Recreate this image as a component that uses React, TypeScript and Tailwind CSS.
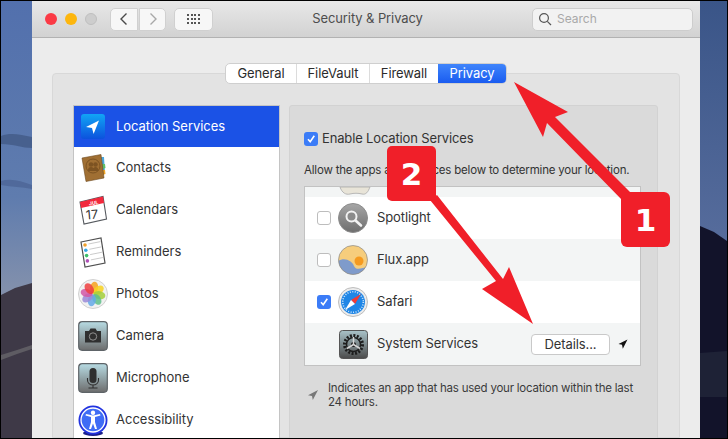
import type { ReactNode } from "react";

const FONT = "font-['Inter','Liberation_Sans',sans-serif]";

function LeftWallpaper() {
  return (
    <svg width="31" height="437" viewBox="0 0 31 437" className="shrink-0">
      <defs>
        <linearGradient id="lw" x1="0" y1="0" x2="0" y2="1">
          <stop offset="0" stopColor="#5270ad" />
          <stop offset="0.45" stopColor="#5f7cae" />
          <stop offset="0.66" stopColor="#8290ac" />
        </linearGradient>
      </defs>
      <rect width="31" height="437" fill="url(#lw)" />
      <path d="M0 135c10-4 20-1 31 1v11c-10 0-18-4-31-4z" fill="#3f5680" opacity=".7" />
      <path d="M0 180c10-3 20 0 31 4v4c-10-2-20-2-31-4z" fill="#4a6393" opacity=".7" />
      <path d="M0 294l14-7 17-5v155H0z" fill="#3e3947" />
      <path d="M0 354l16-5 15-5v4l-15 5-16 6z" fill="#5e5c63" />
    </svg>
  );
}

function RightWallpaper() {
  return (
    <svg width="27" height="437" viewBox="0 0 27 437" className="shrink-0">
      <defs>
        <linearGradient id="rw" x1="0" y1="0" x2="0" y2="1">
          <stop offset="0" stopColor="#3a5588" />
          <stop offset="0.55" stopColor="#566c9c" />
        </linearGradient>
      </defs>
      <rect width="27" height="437" fill="url(#rw)" />
      <path d="M0 225l14 6 13 9v197H0z" fill="#12132a" />
      <path d="M0 352l27-2v46H0z" fill="#1e2236" />
    </svg>
  );
}

function TrafficLights() {
  return (
    <div className="flex items-center gap-2">
      <span className="h-3 w-3 rounded-full bg-[#fb3a45]" />
      <span className="h-3 w-3 rounded-full bg-[#fdb60d]" />
      <span className="h-3 w-3 rounded-full border border-[#bfbfbf] bg-[#cdcdcd]" />
    </div>
  );
}

function NavButtons() {
  return (
    <div className="ml-[13px] flex items-center gap-px">
      <div className="flex h-[23px] w-[28px] items-center justify-center rounded-l-[5px] border border-[#d0d0d0] bg-[#f7f7f7]">
        <svg width="10" height="14" viewBox="0 0 10 14" fill="none" stroke="#4a4a4a" strokeWidth="1.4">
          <path d="M7.5 1.5 2 7l5.5 5.5" />
        </svg>
      </div>
      <div className="flex h-[23px] w-[27px] items-center justify-center rounded-r-[5px] border border-[#d0d0d0] bg-[#f7f7f7]">
        <svg width="10" height="14" viewBox="0 0 10 14" fill="none" stroke="#a8a8a8" strokeWidth="1.4">
          <path d="M2.500 1.500 8 7l-5.500 5.500" />
        </svg>
      </div>
      <div className="ml-[7px] grid h-[23px] w-[39px] grid-cols-4 content-center justify-center justify-items-center gap-y-[2px] rounded-[5px] border border-[#d0d0d0] bg-[#f7f7f7] px-[11px]">
        {Array.from({ length: 12 }).map((_, i) => (
          <span key={i} className="h-[2px] w-[2px] bg-[#555]" />
        ))}
      </div>
    </div>
  );
}

function SearchBox() {
  return (
    <div className="flex h-[23px] w-[161px] items-center gap-[5px] rounded-[5px] border border-[#cdcdcd] bg-[#f2f2f2] pl-[5px]">
      <svg width="14" height="14" viewBox="0 0 14 14" fill="none" stroke="#555" strokeWidth="1.2">
        <circle cx="6" cy="6" r="4.4" />
        <path d="m9.3 9.3 3.7 3.7" />
      </svg>
      <span className="text-[12px] text-[#a9a9a9]">Search</span>
    </div>
  );
}

function TitleBar() {
  return (
    <div className="flex h-[37px] shrink-0 items-center border-b border-[#b2b2b2] bg-linear-to-b from-[#e8e8e8] to-[#d2d2d2] pl-[13px] pr-[7px]">
      <TrafficLights />
      <NavButtons />
      <div className="flex-1 pr-[10px] text-center text-[13px] tracking-[-0.1px] text-[#4d4d4d]">Security &amp; Privacy</div>
      <SearchBox />
    </div>
  );
}

function Tabs() {
  return (
    <div className="relative z-10 mx-auto mt-[25px] flex h-[21px] w-[282px] shrink-0 overflow-hidden rounded-[5px] border border-[#cfcfcf] bg-white text-[13px] tracking-[-0.1px] text-[#2b2b2b]">
      <div className="flex w-[71px] items-center justify-center border-r border-[#dcdcdc]">General</div>
      <div className="flex w-[73px] items-center justify-center border-r border-[#dcdcdc]">FileVault</div>
      <div className="flex w-[68px] items-center justify-center">Firewall</div>
      <div className="flex flex-1 items-center justify-center bg-linear-to-b from-[#3f84fb] to-[#1a5bf0] text-white">
        Privacy
      </div>
    </div>
  );
}

function LocationIcon() {
  return (
    <svg width="26" height="26" viewBox="0 0 26 26">
      <defs>
        <linearGradient id="loc" x1="0" y1="0" x2="0" y2="1">
          <stop offset="0" stopColor="#11a5f5" />
          <stop offset="1" stopColor="#0c52dd" />
        </linearGradient>
      </defs>
      <rect x="1" width="24" height="25" rx="3" fill="url(#loc)" />
      <path d="M19 6.5 6 13l6 1 1.6 6z" fill="#fff" />
    </svg>
  );
}

function ContactsIcon() {
  return (
    <svg width="28" height="30" viewBox="0 0 28 30">
      <path d="M22 4h3l1 16-3 2z" fill="#4aa6dc" />
      <path d="M23 11h3l.5 4-3 1z" fill="#5cc06b" />
      <path d="M23 17h3l.5 4-3 1z" fill="#eda529" />
      <path d="M3 5 22 1.500 25 25 7 28.500z" fill="#a06f33" stroke="#6d4a20" strokeWidth=".6" />
      <circle cx="14" cy="13" r="7" fill="none" stroke="#7d5322" strokeWidth="1" />
      <circle cx="12" cy="11.500" r="2.300" fill="#7d5322" />
      <circle cx="16.500" cy="11.500" r="2.300" fill="#7d5322" />
      <path d="M9 18c0-3 1-4 3-4s3 1 3 4zM14 18c0-3 1-4 2.500-4s3 1 3 4z" fill="#7d5322" />
    </svg>
  );
}

function CalendarIcon() {
  return (
    <svg width="30" height="30" viewBox="0 0 30 30">
      <path d="M2 7 25 1.500 28.500 24 6 29z" fill="#fff" stroke="#55595e" strokeWidth="1.100" />
      <path d="M2 7 25 1.500 26 8 3 13z" fill="#f3283c" />
      <text x="11" y="10" fontSize="5" fontWeight="700" fill="#fff" fontFamily="Inter, sans-serif" transform="rotate(-9 14 8)">
        JUL
      </text>
      <text x="8" y="24" fontSize="12.500" fill="#333" fontFamily="Inter, sans-serif" transform="rotate(-5 14 20)">
        17
      </text>
    </svg>
  );
}

function RemindersIcon() {
  const dots = ["#f0a02c", "#38a9e6", "#3ec06a", "#b050b8"];
  return (
    <svg width="28" height="31" viewBox="0 0 28 31">
      <path d="M2 5 22 1 26 26 6 30z" fill="#fff" stroke="#4f4f4f" strokeWidth="1.200" />
      {dots.map((c, i) => (
        <g key={c}>
          <circle cx={6 + i * 0.8} cy={8 + i * 5.300} r="1.800" fill={c} />
          <path d={`M${9.500 + i * 0.8} ${7 + i * 5.300}l12-2.400`} stroke="#b5b5b5" strokeWidth=".7" />
        </g>
      ))}
    </svg>
  );
}

function PhotosIcon() {
  const petals = ["#f7a21d", "#f8d21f", "#a5cf3b", "#5fc08a", "#64a9e8", "#9a8ad8", "#d257a6", "#ef4040"];
  return (
    <svg width="30" height="30" viewBox="0 0 30 30">
      <circle cx="15" cy="15" r="14.500" fill="#f1f1f1" stroke="#d0d0d0" />
      {petals.map((c, i) => (
        <ellipse key={c} cx="15" cy="8.500" rx="4" ry="6" fill={c} opacity=".85" transform={`rotate(${i * 45 + 10} 15 15)`} />
      ))}
    </svg>
  );
}

function CameraIcon() {
  return (
    <svg width="30" height="30" viewBox="0 0 30 30">
      <defs>
        <linearGradient id="cam" x1="0" y1="0" x2="0" y2="1">
          <stop offset="0" stopColor="#b7dbe3" />
          <stop offset="1" stopColor="#6d6d6d" />
        </linearGradient>
      </defs>
      <rect x=".7" y=".7" width="28.600" height="28.600" rx="3.500" fill="url(#cam)" stroke="#5e6468" strokeWidth="1.200" />
      <path d="M7 10h4l1.500-2.500h5L19 10h4v11.500H7z" fill="#2f2f2f" />
      <circle cx="15" cy="15.500" r="3.700" fill="none" stroke="#9a9a9a" strokeWidth=".9" />
    </svg>
  );
}

function MicIcon() {
  return (
    <svg width="30" height="30" viewBox="0 0 30 30">
      <defs>
        <linearGradient id="mic" x1="0" y1="0" x2="0" y2="1">
          <stop offset="0" stopColor="#b7dbe3" />
          <stop offset="1" stopColor="#6d6d6d" />
        </linearGradient>
      </defs>
      <rect x=".7" y=".7" width="28.600" height="28.600" rx="3.500" fill="url(#mic)" stroke="#5e6468" strokeWidth="1.200" />
      <rect x="11.500" y="5" width="7" height="15" rx="3.500" fill="#2f2f2f" />
      <path d="M9.500 15v2c0 3 2.500 5 5.500 5s5.500-2 5.500-5v-2M15 22v3M10.500 25h9" fill="none" stroke="#2f2f2f" strokeWidth="1.100" />
    </svg>
  );
}

function AccessibilityIcon() {
  return (
    <svg width="30" height="31" viewBox="0 0 30 31">
      <ellipse cx="15" cy="28" rx="10" ry="3" fill="#1b1f8a" />
      <circle cx="15" cy="15" r="14.500" fill="#2233e0" />
      <circle cx="15" cy="15" r="12" fill="#3f6cf5" stroke="#fff" strokeWidth="1.300" />
      <circle cx="15" cy="7.800" r="2.200" fill="#fff" />
      <path d="M7.500 10.500 13 12v5l-2 7h2l2-5.500L17 24h2l-2-7v-5l5.500-1.500-.5-1.500-7 1.500L8 9z" fill="#fff" />
    </svg>
  );
}

function SpotlightIcon() {
  return (
    <svg width="30" height="31" viewBox="0 0 30 31">
      <defs>
        <linearGradient id="spot" x1="0" y1="0" x2="0" y2="1">
          <stop offset="0" stopColor="#a6a6a6" />
          <stop offset="1" stopColor="#6e6e6e" />
        </linearGradient>
      </defs>
      <circle cx="15" cy="15" r="14.500" fill="url(#spot)" stroke="#8c8c8c" />
      <circle cx="13.500" cy="13.500" r="5" fill="#8b8b8b" stroke="#f2f2f2" strokeWidth="2" />
      <path d="m17.500 17.500 5.500 5" stroke="#f2f2f2" strokeWidth="2.600" strokeLinecap="round" />
    </svg>
  );
}

function FluxIcon() {
  return (
    <svg width="30" height="30" viewBox="0 0 30 30">
      <clipPath id="flux">
        <circle cx="15" cy="15" r="14.500" />
      </clipPath>
      <g clipPath="url(#flux)">
        <rect width="30" height="30" fill="#f6cd7c" />
        <circle cx="21" cy="16" r="4.500" fill="#f59a1f" />
        <path d="M0 16c7-4 14 0 16 5s8 2 14 1v8H0z" fill="#7f9bcb" />
      </g>
      <circle cx="15" cy="15" r="14.500" fill="none" stroke="#8a8a8a" strokeWidth=".7" />
    </svg>
  );
}

function SafariIcon() {
  return (
    <svg width="30" height="31" viewBox="0 0 30 31">
      <circle cx="15" cy="15" r="14.500" fill="#ececec" stroke="#bdbdbd" />
      <circle cx="15" cy="15" r="12" fill="#1f86e6" />
      <circle cx="15" cy="15" r="10.300" fill="none" stroke="#cfe6fb" strokeWidth="1.600" strokeDasharray="1 1.500" />
      <path d="M23 7 13 13l4 4z" fill="#f23a35" />
      <path d="M7 23l6-10 4 4z" fill="#fff" />
    </svg>
  );
}

function GearIcon() {
  return (
    <svg width="29" height="29" viewBox="0 0 29 29">
      <defs>
        <linearGradient id="gear" x1="0" y1="0" x2="0" y2="1">
          <stop offset="0" stopColor="#a9c3c9" />
          <stop offset="1" stopColor="#4b4b4b" />
        </linearGradient>
      </defs>
      <rect x=".5" y=".5" width="28" height="28" rx="3" fill="url(#gear)" stroke="#555" />
      <circle cx="14.500" cy="14.500" r="9" fill="none" stroke="#1d1d1d" strokeWidth="3" strokeDasharray="2 1.500" />
      <circle cx="14.500" cy="14.500" r="7" fill="none" stroke="#1d1d1d" strokeWidth="1.500" />
      <circle cx="14.500" cy="14.500" r="2.500" fill="#1d1d1d" />
      <path d="M14.500 14.500V7M14.500 14.500l6.500 4M14.500 14.500l-6.500 4" stroke="#d6d6d6" strokeWidth="1.500" />
    </svg>
  );
}

const services: { label: string; icon: ReactNode }[] = [
  { label: "Contacts", icon: <ContactsIcon /> },
  { label: "Calendars", icon: <CalendarIcon /> },
  { label: "Reminders", icon: <RemindersIcon /> },
  { label: "Photos", icon: <PhotosIcon /> },
  { label: "Camera", icon: <CameraIcon /> },
  { label: "Microphone", icon: <MicIcon /> },
  { label: "Accessibility", icon: <AccessibilityIcon /> },
];

function Sidebar() {
  return (
    <aside className="h-[400px] w-[207px] shrink-0 border-x border-t border-[#c4c4c4] bg-white text-[13px] text-[#333]">
      <div className="flex h-[41px] items-center gap-[8px] bg-[#1b52e6] pl-[4px] tracking-[-0.05px] text-white">
        <span className="flex w-[30px] justify-center"><LocationIcon /></span>
        Location Services
      </div>
      {services.map((s) => (
        <div key={s.label} className="flex h-[42px] items-center gap-[6px] pl-[3px]">
          <span className="flex w-[31px] justify-center">{s.icon}</span>
          <span className="ml-[2px]">{s.label}</span>
        </div>
      ))}
    </aside>
  );
}

function CheckBox({ checked }: { checked?: boolean }) {
  if (!checked) {
    return <span className="block h-[14px] w-[14px] rounded-[3px] border border-[#bdbdbd] bg-white" />;
  }
  return (
    <span className="flex h-[14px] w-[14px] items-center justify-center rounded-[3px] bg-[#3b7cf7]">
      <svg width="10" height="10" viewBox="0 0 10 10" fill="none" stroke="#fff" strokeWidth="1.600">
        <path d="m2 5.300 2.200 2.500L8.300 1.800" />
      </svg>
    </span>
  );
}

function AppRow({
  icon,
  label,
  shaded,
  checked,
  showBox = true,
  children,
}: {
  icon: ReactNode;
  label: string;
  shaded?: boolean;
  checked?: boolean;
  showBox?: boolean;
  children?: ReactNode;
}) {
  return (
    <div className={`flex h-[42px] items-center pl-[12px] ${shaded ? "bg-[#f3f5f5]" : "bg-white"}`}>
      <span className="w-[14px]">{showBox && <CheckBox checked={checked} />}</span>
      <span className="ml-[7px] flex w-[30px] justify-center">{icon}</span>
      <span className="ml-[9px] flex-1 tracking-[-0.1px]">{label}</span>
      {children}
    </div>
  );
}

function DetailPanel() {
  return (
    <section className="h-[400px] w-[369px] shrink-0 rounded-t-[3px] border border-[#d2d2d2] bg-[#dadada] pl-[14px] pr-[16px] pt-[25px] text-[#333]">
      <label className="flex h-[16px] items-center gap-[4px] text-[13px] tracking-[-0.15px]">
        <CheckBox checked />
        Enable Location Services
      </label>
      <p className="mt-[15px] whitespace-nowrap text-[11.5px] leading-[16px] tracking-[-0.2px]">
        Allow the apps and services below to determine your location.
      </p>
      <div className="mt-[8px] overflow-hidden border border-[#c2c2c2] bg-[#f3f5f5] text-[13px]">
        <div className="h-[10px] overflow-hidden">
          <svg width="40" height="10" viewBox="0 0 40 10" className="ml-[33px]">
            <path d="M2 0c2 6 6 8 10 7s8-1 12 0 6-2 8-7z" fill="#e8e4d8" stroke="#aaa" strokeWidth=".8" />
          </svg>
        </div>
        <AppRow icon={<SpotlightIcon />} label="Spotlight" />
        <AppRow icon={<FluxIcon />} label="Flux.app" shaded />
        <AppRow icon={<SafariIcon />} label="Safari" checked />
        <AppRow icon={<GearIcon />} label="System Services" shaded showBox={false}>
          <button className="h-[21px] w-[79px] rounded-[4px] border border-[#c9c9c9] bg-white text-[13px] tracking-[-0.1px] text-[#333]">
            Details...
          </button>
          <svg width="12" height="12" viewBox="0 0 12 12" className="ml-[7px] mr-[11px]">
            <path d="M10.500 1.500 1.500 6l3.500.7.8 4z" fill="#111" />
          </svg>
        </AppRow>
      </div>
      <div className="mt-[15px] flex items-start">
        <svg width="12" height="12" viewBox="0 0 12 12" className="ml-[3px] mt-[8px] shrink-0">
          <path d="M11 1 1 6.200l4 .8.8 4z" fill="#777" />
        </svg>
        <p className="ml-[9px] text-[11.5px] leading-[14px] tracking-[-0.22px] text-[#3a3a3a]">
          Indicates an app that has used your location within the last 24 hours.
        </p>
      </div>
    </section>
  );
}

function Annotations() {
  return (
    <>
      <svg width="728" height="439" viewBox="0 0 728 439" className="pointer-events-none absolute inset-0 z-20">
        <polygon points="514,82 568,112 555,117 630,192 622,200 547,123 543,137" fill="#f01f29" />
        <polygon points="430,200 437,195 503,279 509,267 533,324 482,289 496,281" fill="#f01f29" />
      </svg>
      <div className="absolute left-[387px] top-[146px] z-30 flex h-[55px] w-[49px] items-center justify-center rounded-[5px] bg-[#f01f29] pt-[2px] font-['DejaVu_Sans',sans-serif] text-[31px] font-bold text-white">
        2
      </div>
      <div className="absolute left-[621px] top-[192px] z-30 flex h-[55px] w-[49px] items-center justify-center rounded-[6px] bg-[#f01f29] pt-[2px] font-['DejaVu_Sans',sans-serif] text-[31px] font-bold text-white">
        1
      </div>
    </>
  );
}

export default function App() {
  return (
    <div className={`relative flex h-[439px] w-[728px] flex-col overflow-hidden bg-black ${FONT}`}>
      <div className="mb-px mt-px flex h-[437px] pl-px pr-px">
        <LeftWallpaper />
        <div className="flex w-[668px] shrink-0 flex-col overflow-hidden bg-[#ececec]">
          <TitleBar />
          <Tabs />
          <div className="-mt-[11px] mx-[20px] flex min-h-0 flex-1 gap-[9px] rounded-t-[4px] border border-[#d8d8d8] bg-[#e3e3e3] pl-[20px] pt-[31px]">
            <Sidebar />
            <DetailPanel />
          </div>
        </div>
        <RightWallpaper />
      </div>
      <Annotations />
    </div>
  );
}
